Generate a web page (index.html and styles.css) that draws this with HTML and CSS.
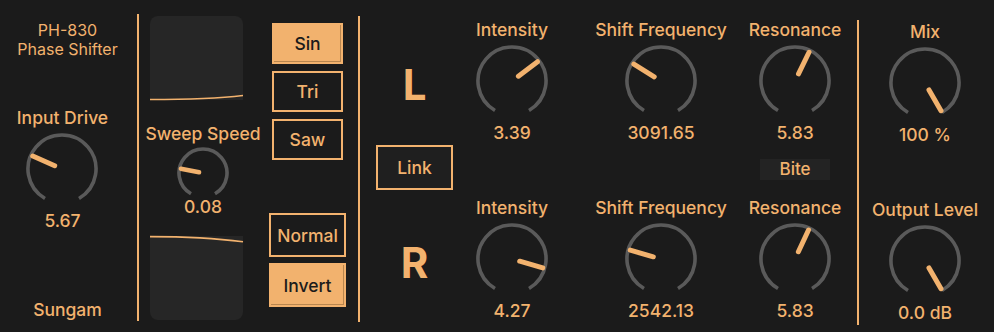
FILE: index.html
```html
<!DOCTYPE html>
<html lang="en">
<head>
  <meta charset="UTF-8">
  <title>PH-830 Phase Shifter</title>
  <link rel="stylesheet" href="styles.css">
</head>
<body>

  <div class="device">

    <section class="info">
      <div class="title">PH-830<br>Phase Shifter</div>
      <div class="knob knob-drive">
        <div class="knob-label">Input Drive</div>
        <svg class="dial" viewBox="0 0 72 72"><path class="track" d="M19 65.44 A34 34 0 1 1 53 65.44"/><line class="needle" x1="36" y1="28" x2="36" y2="4" transform="rotate(-66 36 36)"/></svg>
        <div class="knob-value">5.67</div>
      </div>
      <div class="maker">Sungam</div>
    </section>

    <div class="divider"></div>

    <section class="lfo">
      <div class="lfo-main">
        <div class="scope scope-top">
          <svg viewBox="0 0 93 84"><path class="wave" d="M0 83.5 C40 83.5 68 82.5 93 79.5"/></svg>
        </div>
        <div class="knob knob-sweep">
          <div class="knob-label">Sweep Speed</div>
          <svg class="dial dial-small" viewBox="0 0 52 50"><path class="track" d="M14 46.78 A24 24 0 1 1 38 46.78"/><line class="needle" x1="26" y1="22" x2="26" y2="3.5" transform="rotate(-79 26 26)"/></svg>
          <div class="knob-value">0.08</div>
        </div>
        <div class="scope scope-bottom">
          <svg viewBox="0 0 93 84"><path class="wave" d="M0 0.6 C40 0.6 64 2 93 5.8"/></svg>
        </div>
      </div>
      <div class="lfo-buttons">
        <div class="shapes">
          <button class="btn btn-shape btn-on">Sin</button>
          <button class="btn btn-shape">Tri</button>
          <button class="btn btn-shape">Saw</button>
        </div>
        <div class="phase">
          <button class="btn btn-phase">Normal</button>
          <button class="btn btn-phase btn-on">Invert</button>
        </div>
      </div>
    </section>

    <div class="divider divider-stereo"></div>

    <section class="stereo">
      <div class="side">L</div>
      <div class="knob">
        <div class="knob-label">Intensity</div>
        <svg class="dial" viewBox="0 0 72 72"><path class="track" d="M19 65.44 A34 34 0 1 1 53 65.44"/><line class="needle" x1="36" y1="28" x2="36" y2="4" transform="rotate(53 36 36)"/></svg>
        <div class="knob-value">3.39</div>
      </div>
      <div class="knob">
        <div class="knob-label">Shift Frequency</div>
        <svg class="dial" viewBox="0 0 72 72"><path class="track" d="M19 65.44 A34 34 0 1 1 53 65.44"/><line class="needle" x1="36" y1="28" x2="36" y2="4" transform="rotate(-58 36 36)"/></svg>
        <div class="knob-value">3091.65</div>
      </div>
      <div class="knob">
        <div class="knob-label">Resonance</div>
        <svg class="dial" viewBox="0 0 72 72"><path class="track" d="M19 65.44 A34 34 0 1 1 53 65.44"/><line class="needle" x1="36" y1="28" x2="36" y2="4" transform="rotate(26 36 36)"/></svg>
        <div class="knob-value">5.83</div>
      </div>

      <button class="link">Link</button>
      <div class="bite">Bite</div>

      <div class="side">R</div>
      <div class="knob">
        <div class="knob-label">Intensity</div>
        <svg class="dial" viewBox="0 0 72 72"><path class="track" d="M19 65.44 A34 34 0 1 1 53 65.44"/><line class="needle" x1="36" y1="28" x2="36" y2="4" transform="rotate(106 36 36)"/></svg>
        <div class="knob-value">4.27</div>
      </div>
      <div class="knob">
        <div class="knob-label">Shift Frequency</div>
        <svg class="dial" viewBox="0 0 72 72"><path class="track" d="M19 65.44 A34 34 0 1 1 53 65.44"/><line class="needle" x1="36" y1="28" x2="36" y2="4" transform="rotate(-74 36 36)"/></svg>
        <div class="knob-value">2542.13</div>
      </div>
      <div class="knob">
        <div class="knob-label">Resonance</div>
        <svg class="dial" viewBox="0 0 72 72"><path class="track" d="M19 65.44 A34 34 0 1 1 53 65.44"/><line class="needle" x1="36" y1="28" x2="36" y2="4" transform="rotate(25 36 36)"/></svg>
        <div class="knob-value">5.83</div>
      </div>
    </section>

    <div class="divider divider-out"></div>

    <section class="output">
      <div class="knob">
        <div class="knob-label">Mix</div>
        <svg class="dial" viewBox="0 0 72 72"><path class="track" d="M19 65.44 A34 34 0 1 1 53 65.44"/><line class="needle" x1="36" y1="28" x2="36" y2="4" transform="rotate(150 36 36)"/></svg>
        <div class="knob-value">100 %</div>
      </div>
      <div class="knob">
        <div class="knob-label">Output Level</div>
        <svg class="dial" viewBox="0 0 72 72"><path class="track" d="M19 65.44 A34 34 0 1 1 53 65.44"/><line class="needle" x1="36" y1="28" x2="36" y2="4" transform="rotate(150 36 36)"/></svg>
        <div class="knob-value">0.0 dB</div>
      </div>
    </section>

  </div>

</body>
</html>
```

FILE: styles.css
```css
body {
  margin: 0;
  background: #1b1b1b;
  color: #f2b26e;
  font-family: "Inter", "Liberation Sans", sans-serif;
}
.device {
  display: flex;
  width: 994px;
  height: 332px;
}
section {
  box-sizing: border-box;
  height: 332px;
}

/* dividers */
.divider {
  width: 2px;
  background: #f2b26e;
  margin: 14px 0 11px;
}
.divider-stereo {
  margin: 16px 0 10px;
}
.divider-out {
  margin: 20px 0 7px;
}

/* knobs */
.knob {
  display: flex;
  flex-direction: column;
  align-items: center;
}
.knob-label,
.knob-value {
  font-size: 17.5px;
  font-weight: 500;
  line-height: 20px;
  white-space: nowrap;
}
.dial {
  display: block;
  width: 72px;
  height: 72px;
  margin: 5px 0 6px;
}
.dial-small {
  width: 52px;
  height: 50px;
  margin: 3px 0 0;
}
.track {
  fill: none;
  stroke: #5a5a5a;
  stroke-width: 3.6;
}
.needle {
  stroke: #f2b26e;
  stroke-width: 5;
  stroke-linecap: round;
}
.dial-small .needle {
  stroke-width: 4.5;
}

/* left info column */
.info {
  width: 137px;
  display: flex;
  flex-direction: column;
  align-items: center;
  padding: 21px 2px 12px 0;
}
.title {
  font-size: 16px;
  line-height: 19px;
  text-align: center;
}
.knob-drive {
  margin-top: 49px;
  margin-right: 10px;
}
.maker {
  margin-top: auto;
  font-size: 17.5px;
  font-weight: 500;
  line-height: 20px;
}

/* lfo */
.lfo {
  width: 219px;
  display: flex;
  gap: 13px;
  padding-left: 11px;
}
.lfo-main {
  width: 106px;
  display: flex;
  flex-direction: column;
  padding-top: 16px;
}
.scope {
  width: 93px;
  height: 84px;
  background: #262626;
}
.scope svg {
  display: block;
  width: 93px;
  height: 84px;
  overflow: visible;
}
.scope-top {
  border-radius: 8px 8px 0 0;
}
.scope-bottom {
  border-radius: 0 0 8px 8px;
  margin-top: 19px;
}
.wave {
  fill: none;
  stroke: #f2b26e;
  stroke-width: 1.6;
}
.knob-sweep {
  align-self: center;
  margin-top: 24px;
}
.lfo-buttons {
  width: 77px;
  display: flex;
  flex-direction: column;
  padding-top: 23px;
}
.shapes {
  display: flex;
  flex-direction: column;
  align-items: center;
  gap: 7px;
}
.phase {
  display: flex;
  flex-direction: column;
  gap: 6px;
  margin-top: 53px;
}
.btn {
  box-sizing: border-box;
  padding: 0;
  border: 2px solid #f2b26e;
  background: #1b1b1b;
  color: #f2b26e;
  font-family: inherit;
  font-size: 17.5px;
  font-weight: 500;
}
.btn-shape {
  width: 71px;
  height: 41px;
}
.btn-phase {
  width: 77px;
  height: 44px;
}
.btn-on {
  background: #f2b26e;
  color: #1b1b1b;
  box-shadow: inset -1px -1px 0 #b8864f;
}

/* stereo section */
.stereo {
  width: 497px;
  display: grid;
  grid-template-columns: 77px 118px 180px 88px;
  grid-template-rows: 123px 55px 123px;
  justify-items: center;
  align-items: start;
  padding: 20px 0 0 16px;
}
.side {
  align-self: center;
  margin-top: 6px;
  font-size: 42px;
  font-weight: 700;
  line-height: 42px;
}
.link {
  grid-column: 1;
  width: 77px;
  height: 45px;
  margin-top: 2px;
  box-sizing: border-box;
  padding: 0;
  border: 2px solid #f2b26e;
  background: #1f1f1f;
  color: #f2b26e;
  font-family: inherit;
  font-size: 17.5px;
  font-weight: 500;
}
.bite {
  grid-column: 4;
  width: 70px;
  height: 21px;
  margin-top: 16px;
  background: #232323;
  text-align: center;
  font-size: 17px;
  font-weight: 500;
  line-height: 21px;
}

/* output section */
.output {
  width: 135px;
  display: flex;
  flex-direction: column;
  align-items: center;
  gap: 55px;
  padding: 22px 3px 0 0;
}
```
